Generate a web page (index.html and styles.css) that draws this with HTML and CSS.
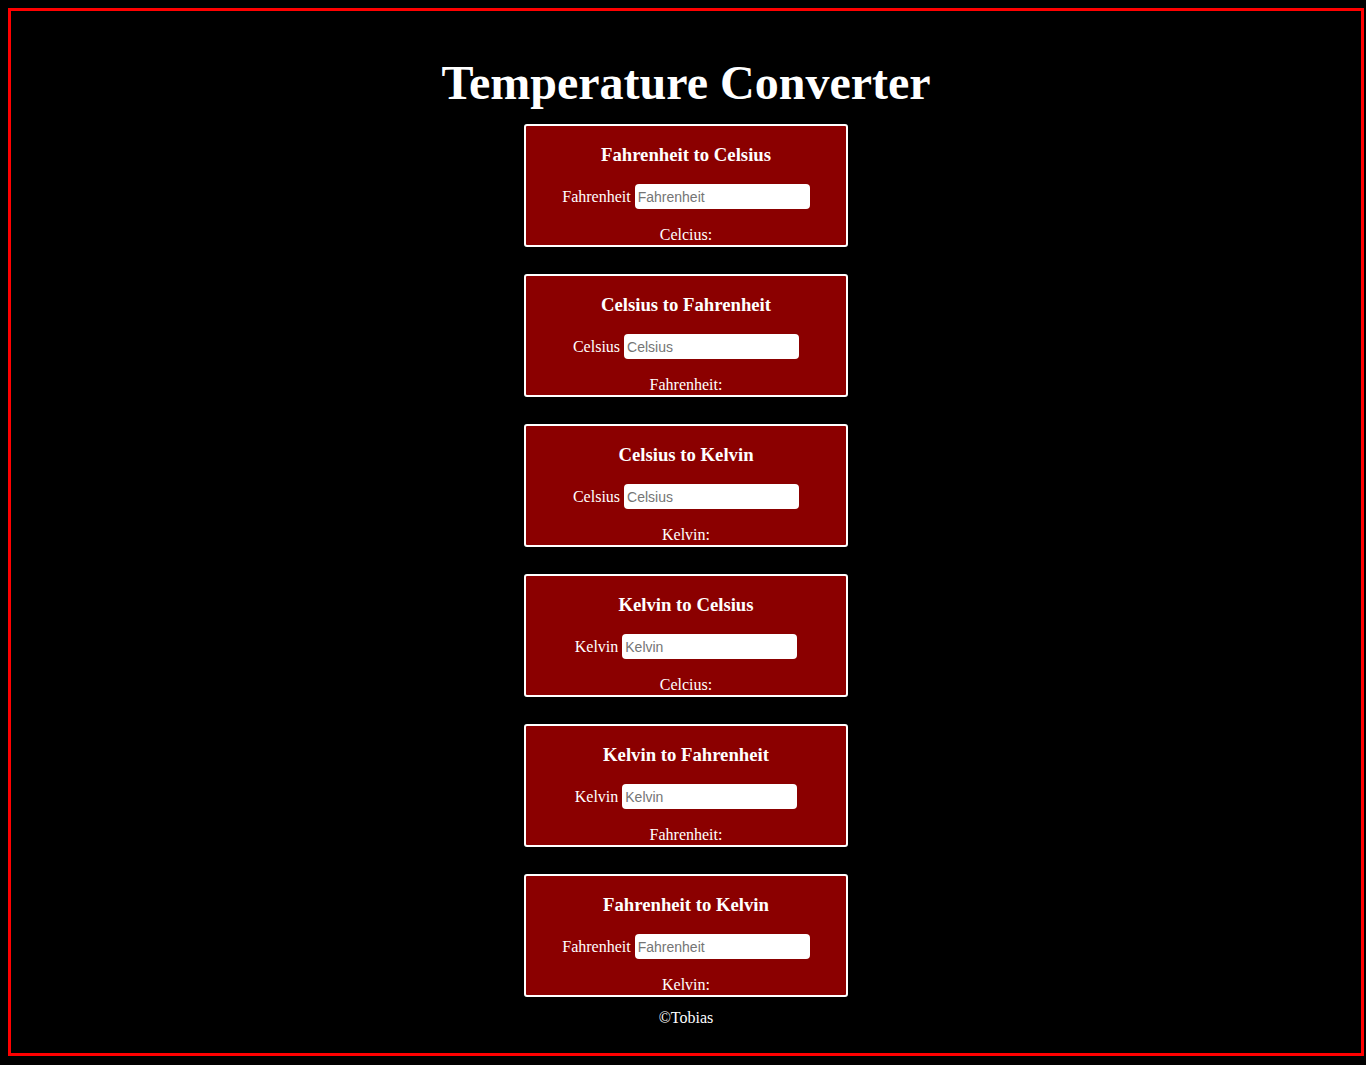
FILE: index.html
```html
<!DOCTYPE html>
<html lang="en">
<head>
<meta charset="utf-8">
<title>Temperature Converter</title>
<link rel="stylesheet" href="styles.css">
</head>
<body>
<div class="page">
  <h1 class="title">Temperature Converter</h1>

  <section class="card">
    <h3 class="card-title">Fahrenheit to Celsius</h3>
    <div class="row"><label class="label">Fahrenheit</label> <input class="field" type="text" placeholder="Fahrenheit"></div>
    <p class="result">Celcius:</p>
  </section>

  <section class="card">
    <h3 class="card-title">Celsius to Fahrenheit</h3>
    <div class="row"><label class="label">Celsius</label> <input class="field" type="text" placeholder="Celsius"></div>
    <p class="result">Fahrenheit:</p>
  </section>

  <section class="card">
    <h3 class="card-title">Celsius to Kelvin</h3>
    <div class="row"><label class="label">Celsius</label> <input class="field" type="text" placeholder="Celsius"></div>
    <p class="result">Kelvin:</p>
  </section>

  <section class="card">
    <h3 class="card-title">Kelvin to Celsius</h3>
    <div class="row"><label class="label">Kelvin</label> <input class="field" type="text" placeholder="Kelvin"></div>
    <p class="result">Celcius:</p>
  </section>

  <section class="card">
    <h3 class="card-title">Kelvin to Fahrenheit</h3>
    <div class="row"><label class="label">Kelvin</label> <input class="field" type="text" placeholder="Kelvin"></div>
    <p class="result">Fahrenheit:</p>
  </section>

  <section class="card">
    <h3 class="card-title">Fahrenheit to Kelvin</h3>
    <div class="row"><label class="label">Fahrenheit</label> <input class="field" type="text" placeholder="Fahrenheit"></div>
    <p class="result">Kelvin:</p>
  </section>

  <p class="footer">&copy;Tobias</p>
</div>
</body>
</html>
```

FILE: styles.css
```css
html {
  background: #000;
}

body {
  margin: 8px 2px 8px 8px;
  background: #000;
  color: #fff;
  font-family: "Liberation Serif", "Times New Roman", serif;
  font-size: 16px;
}

.page {
  border: 3px solid #ff0000;
  display: flex;
  flex-direction: column;
  align-items: center;
  gap: 27px;
}

.title {
  margin: 44px 0 -13px;
  font-size: 48px;
  font-weight: bold;
  line-height: 55px;
  text-align: center;
}

.card {
  width: 320px;
  height: 119px;
  box-sizing: content-box;
  background: #8b0000;
  border: 2px solid #fff;
  border-radius: 3px;
  text-align: center;
  display: flex;
  flex-direction: column;
  align-items: center;
}

.card-title {
  margin: 18px 0 18px;
  font-size: 18.72px;
  line-height: 22px;
  font-weight: bold;
}

.row {
  display: flex;
  align-items: center;
  gap: 4px;
  height: 25px;
}

.label {
  font-size: 16px;
}

.field {
  width: 175px;
  height: 25px;
  box-sizing: border-box;
  border: none;
  border-radius: 4px;
  padding: 0 3px;
  background: #fff;
  font-family: "Liberation Sans", Arial, sans-serif;
  font-size: 14px;
  color: #000;
  outline: none;
}

.field::placeholder {
  color: #757575;
}

.result {
  margin: 17px 0 0;
  font-size: 16px;
  line-height: 18px;
}

.footer {
  margin: -15px 0 26px;
  font-size: 16px;
  line-height: 18px;
}
```
